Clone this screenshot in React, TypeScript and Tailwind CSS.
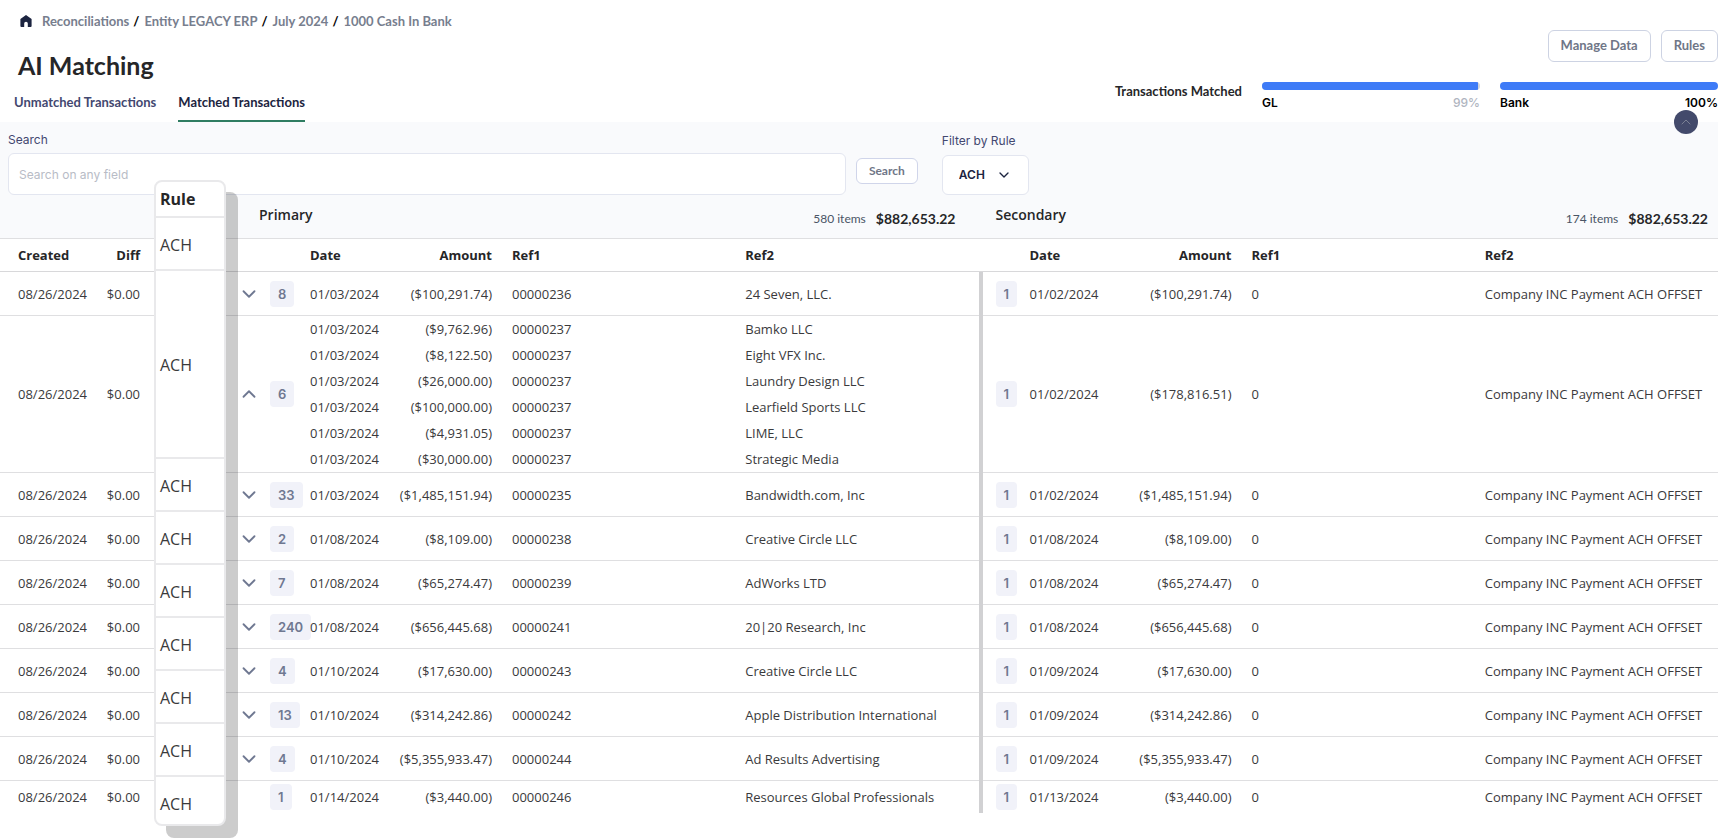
import React, { useState } from 'react';
import { ChevronDown, ChevronUp } from 'lucide-react';
import { clsx } from 'clsx';

interface Line {
  date: string;
  amount: string;
  ref1: string;
  ref2: string;
}

interface Match {
  id: string;
  count: number;
  expanded?: boolean;
  primary: Line[];
  secondary: Line;
}

const OFFSET = 'Company INC Payment ACH OFFSET';

function single(count: number, ref1: string, ref2: string, date: string, secondaryDate: string, amount: string): Match {
  return {
    id: ref1,
    count,
    primary: [{ date, amount, ref1, ref2 }],
    secondary: { date: secondaryDate, amount, ref1: '0', ref2: OFFSET },
  };
}

const MATCHES: Match[] = [
  single(8, '00000236', '24 Seven, LLC.', '01/03/2024', '01/02/2024', '($100,291.74)'),
  {
    id: '00000237',
    count: 6,
    expanded: true,
    primary: [
      { date: '01/03/2024', amount: '($9,762.96)', ref1: '00000237', ref2: 'Bamko LLC' },
      { date: '01/03/2024', amount: '($8,122.50)', ref1: '00000237', ref2: 'Eight VFX Inc.' },
      { date: '01/03/2024', amount: '($26,000.00)', ref1: '00000237', ref2: 'Laundry Design LLC' },
      { date: '01/03/2024', amount: '($100,000.00)', ref1: '00000237', ref2: 'Learfield Sports LLC' },
      { date: '01/03/2024', amount: '($4,931.05)', ref1: '00000237', ref2: 'LIME, LLC' },
      { date: '01/03/2024', amount: '($30,000.00)', ref1: '00000237', ref2: 'Strategic Media' },
    ],
    secondary: { date: '01/02/2024', amount: '($178,816.51)', ref1: '0', ref2: OFFSET },
  },
  single(33, '00000235', 'Bandwidth.com, Inc', '01/03/2024', '01/02/2024', '($1,485,151.94)'),
  single(2, '00000238', 'Creative Circle LLC', '01/08/2024', '01/08/2024', '($8,109.00)'),
  single(7, '00000239', 'AdWorks LTD', '01/08/2024', '01/08/2024', '($65,274.47)'),
  single(240, '00000241', '20|20 Research, Inc', '01/08/2024', '01/08/2024', '($656,445.68)'),
  single(4, '00000243', 'Creative Circle LLC', '01/10/2024', '01/09/2024', '($17,630.00)'),
  single(13, '00000242', 'Apple Distribution International', '01/10/2024', '01/09/2024', '($314,242.86)'),
  single(4, '00000244', 'Ad Results Advertising', '01/10/2024', '01/09/2024', '($5,355,933.47)'),
  single(1, '00000246', 'Resources Global Professionals', '01/14/2024', '01/13/2024', '($3,440.00)'),
];

const CRUMBS = ['Reconciliations', 'Entity LEGACY ERP', 'July 2024', '1000 Cash In Bank'];

function HomeIcon() {
  return (
    <svg viewBox="0 0 12 12" className="size-3" fill="#1c2440" aria-hidden="true">
      <path d="M6 0 11.6 4.1V11a1 1 0 0 1-1 1H7.8V8.6a1.8 1.8 0 0 0-3.6 0V12H1.4a1 1 0 0 1-1-1V4.1Z" />
    </svg>
  );
}

function Progress({ label, value }: { label: string; value: number }) {
  return (
    <div className="w-[218px]">
      <div className="h-2 overflow-hidden rounded-full bg-gray-300">
        <div className="h-full bg-[#3e7bf7]" style={{ width: `${value}%` }} />
      </div>
      <div className="mt-1 flex justify-between text-xs leading-[18px] font-semibold text-black">
        <span>{label}</span>
        <span className={clsx(value < 100 && 'font-medium text-[#b0b5bf]')}>{value}%</span>
      </div>
    </div>
  );
}

function Badge({ children }: { children: React.ReactNode }) {
  return (
    <span className="inline-block rounded bg-[#f1f2f9] px-2 font-[Inter,sans-serif] text-[13px] leading-[26px] font-semibold text-[#6f7891]">
      {children}
    </span>
  );
}

function Totals({ title, items, amount }: { title: string; items: number; amount: string }) {
  return (
    <div className="flex items-end justify-between pb-1">
      <span className="pb-1 text-sm font-semibold">{title}</span>
      <span className="flex items-center gap-[10px] font-[Lato,sans-serif] leading-6">
        <span className="text-xs font-normal text-gray-600">{items} items</span>
        <span className="text-sm font-bold">{amount}</span>
      </span>
    </div>
  );
}

function MatchRow({ match, last }: { match: Match; last: boolean }) {
  const [open, setOpen] = useState(Boolean(match.expanded));
  const lines = open ? match.primary : match.primary.slice(0, 1);
  const cell = clsx('p-0', last ? 'h-8' : 'h-11 border-b border-[#dfdfe1]');
  const { secondary } = match;

  return (
    <tr>
      <td className={clsx(cell, 'pl-[18px]')}>08/26/2024</td>
      <td className={clsx(cell, 'text-right')}>$0.00</td>
      <td className={cell} />
      <td className={cell}>
        {match.count > 1 && (
          <button
            type="button"
            aria-label={open ? 'Collapse' : 'Expand'}
            onClick={() => setOpen(!open)}
            className="ml-[10px] block text-[#6f7891]"
          >
            {open ? <ChevronUp className="size-[22px]" strokeWidth={2} /> : <ChevronDown className="size-[22px]" strokeWidth={2} />}
          </button>
        )}
      </td>
      <td className={cell}><Badge>{match.count}</Badge></td>
      <td className={cell}>{lines.map((l, i) => <div key={i}>{l.date}</div>)}</td>
      <td className={clsx(cell, 'text-right')}>{lines.map((l, i) => <div key={i}>{l.amount}</div>)}</td>
      <td className={clsx(cell, 'pl-5')}>{lines.map((l, i) => <div key={i}>{l.ref1}</div>)}</td>
      <td className={clsx(cell, 'pl-[10px]')}>{lines.map((l, i) => <div key={i}>{l.ref2}</div>)}</td>
      <td className="bg-[#d1d1d3] p-0" />
      <td className={clsx(cell, 'pl-[13px]')}><Badge>1</Badge></td>
      <td className={cell}>{secondary.date}</td>
      <td className={clsx(cell, 'text-right')}>{secondary.amount}</td>
      <td className={clsx(cell, 'pl-5')}>{secondary.ref1}</td>
      <td className={clsx(cell, 'pl-[10px]')}>{secondary.ref2}</td>
    </tr>
  );
}

function RuleColumn() {
  return (
    <div className="absolute -top-[15px] left-[154px] h-[646px] w-[72px] overflow-hidden rounded-lg border-2 border-[#e9e9eb] bg-white shadow-[12px_12px_0_rgba(0,0,0,0.2)]">
      <table className="w-full border-separate border-spacing-0 text-left text-base text-[#3a3a3c]">
        <thead>
          <tr>
            <th className="h-9 border-b-2 border-[#e9e9eb] p-0 pl-1 leading-8 font-bold text-[#262628]">Rule</th>
          </tr>
        </thead>
        <tbody>
          {MATCHES.slice(0, 9).map((match) => (
            <tr key={match.id}>
              <td className={clsx('border-b-2 border-[#e9e9eb] p-0 pt-[2px] pl-1', match.expanded ? 'h-[188px]' : 'h-[53px]')}>ACH</td>
            </tr>
          ))}
        </tbody>
      </table>
    </div>
  );
}

export default function App() {
  const [query, setQuery] = useState('');
  const [tab, setTab] = useState('Matched Transactions');

  return (
    <div className="min-h-screen bg-white pr-3 font-['Open_Sans','Noto_Sans',sans-serif] text-[13px] text-[#3a3a3c]">
      <header className="flex justify-between font-[Lato,sans-serif]">
        <div>
          <nav aria-label="Breadcrumb" className="flex items-center pt-[11px] pl-5 text-[13px] leading-5 font-bold text-[#777e8e]">
            <a href="#home" aria-label="Home" className="mr-[10px]"><HomeIcon /></a>
            {CRUMBS.map((crumb, i) => (
              <React.Fragment key={crumb}>
                {i > 0 && <span className="mr-[5px] ml-1 text-black">/</span>}
                <a href="#crumb">{crumb}</a>
              </React.Fragment>
            ))}
          </nav>
          <h1 className="mt-[18px] pl-[18px] text-[25px] leading-8 font-bold text-[#262628]">AI Matching</h1>
          <div role="tablist" className="mt-[13px] flex gap-[22px] pl-[14px]">
            {['Unmatched Transactions', 'Matched Transactions'].map((name) => (
              <button
                key={name}
                type="button"
                role="tab"
                aria-selected={tab === name}
                onClick={() => setTab(name)}
                className={clsx(
                  'border-b-2 pb-[10px] text-[13px] leading-4 font-bold',
                  tab === name ? 'border-[#2f7d62] text-[#1c2440]' : 'border-transparent text-[#434870]'
                )}
              >
                {name}
              </button>
            ))}
          </div>
        </div>

        <div className="relative pt-[30px]">
          <div className="flex justify-end gap-[10px] text-[13px] font-bold text-[#6f7687]">
            <button type="button" className="h-8 rounded-md border border-[#cdd3e3] px-3">Manage Data</button>
            <button type="button" className="h-8 rounded-md border border-[#cdd3e3] px-3">Rules</button>
          </div>
          <div className="mt-5 flex gap-5 font-[Inter,sans-serif]">
            <span className="font-[Lato,sans-serif] text-[13px] leading-[18px] font-bold text-[#262628]">Transactions Matched</span>
            <Progress label="GL" value={99} />
            <Progress label="Bank" value={100} />
          </div>
          <button
            type="button"
            aria-label="Collapse header"
            className="absolute right-5 -bottom-3 flex size-6 items-center justify-center rounded-full bg-[#434a6b] text-[#7b8094]"
          >
            <ChevronUp className="size-4" strokeWidth={1.5} />
          </button>
        </div>
      </header>

      <main>
        <form
          className="flex items-end bg-[#f9fafc] pt-2 pl-2 font-[Inter,sans-serif] text-[#434870]"
          onSubmit={(e) => e.preventDefault()}
        >
          <div className="w-[49%]">
            <label htmlFor="search" className="block text-xs leading-5">Search</label>
            <input
              id="search"
              type="text"
              value={query}
              onChange={(e) => setQuery(e.target.value)}
              placeholder="Search on any field"
              className="mt-[3px] block h-[42px] w-full rounded-md border border-[#e3e6f0] bg-white px-[10px] text-xs placeholder:text-[#b8bcc6]"
            />
          </div>
          <button
            type="submit"
            className="mb-[11px] ml-[10px] h-[26px] rounded-md border border-[#d0d5ea] bg-white px-3 font-[Lato,sans-serif] text-xs font-bold text-[#6f7687]"
          >
            Search
          </button>
          <div className="ml-6">
            <label htmlFor="rule" className="block text-xs leading-5">Filter by Rule</label>
            <div className="relative mt-1 w-[87px]">
              <select
                id="rule"
                className="h-10 w-full appearance-none rounded-md border border-[#e3e6f0] bg-white pl-4 text-xs font-semibold text-[#1c2440]"
              >
                <option>ACH</option>
              </select>
              <ChevronDown className="pointer-events-none absolute top-3 right-[17px] size-4 text-[#1c2440]" strokeWidth={2} />
            </div>
          </div>
        </form>

        <div className="relative">
          <table className="w-full table-fixed border-separate border-spacing-0 text-left leading-[26px]">
            <colgroup>
              <col className="w-[90px]" />
              <col className="w-[50px]" />
              <col className="w-[88px]" />
              <col className="w-[42px]" />
              <col className="w-10" />
              <col className="w-[75px]" />
              <col className="w-[107px]" />
              <col />
              <col />
              <col className="w-1" />
              <col className="w-[47px]" />
              <col className="w-[75px]" />
              <col className="w-[127px]" />
              <col />
              <col />
            </colgroup>
            <thead className="text-[#262628]">
              <tr className="bg-[#f9fafc]">
                <td colSpan={3} className="h-11 border-b border-[#dfdfe1] p-0" />
                <th colSpan={6} className="border-b border-[#dfdfe1] p-0 pt-1 pr-[23px] pl-[31px]">
                  <Totals title="Primary" items={580} amount="$882,653.22" />
                </th>
                <td className="border-b border-[#dfdfe1] p-0" />
                <th colSpan={5} className="border-b border-[#dfdfe1] p-0 pt-1 pr-[10px] pl-[13px]">
                  <Totals title="Secondary" items={174} amount="$882,653.22" />
                </th>
              </tr>
              <tr className="*:h-[33px] *:border-b *:border-[#d8d8da] *:p-0">
                <th><span className="pl-[18px]">Created</span></th>
                <th className="text-right">Diff</th>
                <td colSpan={3} />
                <th>Date</th>
                <th className="text-right">Amount</th>
                <th><span className="pl-5">Ref1</span></th>
                <th><span className="pl-[10px]">Ref2</span></th>
                <td colSpan={2} />
                <th>Date</th>
                <th className="text-right">Amount</th>
                <th><span className="pl-5">Ref1</span></th>
                <th><span className="pl-[10px]">Ref2</span></th>
              </tr>
            </thead>
            <tbody>
              {MATCHES.map((match, i) => (
                <MatchRow key={match.id} match={match} last={i === MATCHES.length - 1} />
              ))}
            </tbody>
          </table>
          <RuleColumn />
        </div>
      </main>
    </div>
  );
}
